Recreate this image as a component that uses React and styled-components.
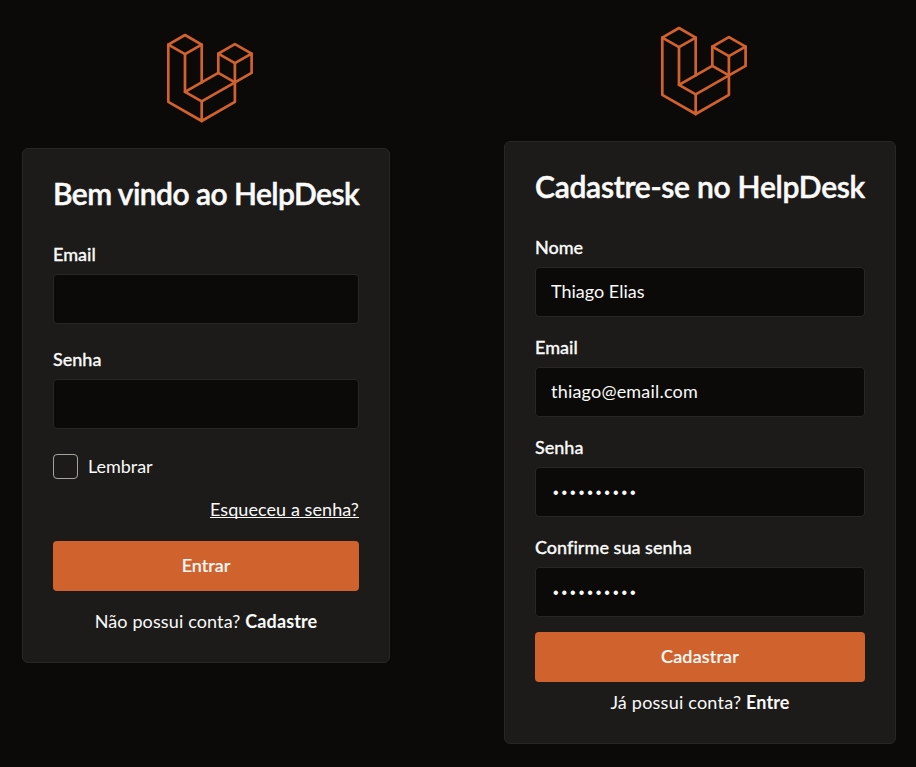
import React from 'react';
import styled, { createGlobalStyle } from 'styled-components';

const GlobalStyle = createGlobalStyle`
  *, *::before, *::after { box-sizing: border-box; }
  body {
    margin: 0;
    background: #0b0a08;
    color: #fafaf9;
    font-family: Lato, sans-serif;
    font-size: 18px;
    font-variant-ligatures: none;
  }
`;

const Page = styled.main`
  display: flex;
  align-items: flex-start;
  gap: 114px;
  min-height: 767px;
  padding: 0 20px 0 22px;
`;

const Column = styled.section`
  display: flex;
  flex-direction: column;
  align-items: center;
  flex: none;
  width: ${(p) => p.$width}px;
  padding-top: ${(p) => p.$top}px;
`;

const LogoSvg = styled.svg`
  display: block;
  width: 88px;
  height: 90px;
  margin: 0 0 25px 8px;
  fill: none;
  stroke: #d2622d;
  stroke-width: 2.7;
  stroke-linejoin: round;
  stroke-linecap: round;
`;

const Card = styled.form`
  display: flex;
  flex-direction: column;
  width: 100%;
  padding: 30px;
  background: #1c1b19;
  border: 1px solid #272624;
  border-radius: 6px;
`;

const Title = styled.h1`
  height: 28px;
  margin: 0 0 36px;
  font-size: 30px;
  font-weight: 600;
  line-height: 28px;
  letter-spacing: ${(p) => p.$spacing}px;
  -webkit-text-stroke: 0.5px currentColor;
  white-space: nowrap;
`;

const Fields = styled.div`
  display: flex;
  flex-direction: column;
  gap: ${(p) => p.$gap}px;
`;

const FieldLabel = styled.label`
  display: flex;
  flex-direction: column;
  gap: 9px;
  font-weight: 500;
  line-height: 22px;
  letter-spacing: ${(p) => p.$spacing || 0}px;
  -webkit-text-stroke: 0.3px currentColor;
`;

const Input = styled.input`
  width: 100%;
  height: 50px;
  padding: ${(p) => (p.type === 'password' ? '2px 15px 0 17px' : '0 15px 2px')};
  background: #0b0a08;
  border: 1px solid #272624;
  border-radius: 4px;
  outline: none;
  color: inherit;
  font: ${(p) => (p.type === 'password' ? '16px "Liberation Sans", sans-serif' : '18px Lato, sans-serif')};
  letter-spacing: ${(p) => (p.type === 'password' ? 2.96 : p.$spacing || 0)}px;
  -webkit-text-stroke: 0;
`;

const Remember = styled.label`
  display: flex;
  align-items: center;
  gap: 10px;
  height: 25px;
  margin-top: 25px;
  line-height: 22px;
  letter-spacing: -0.05px;
`;

const RememberText = styled.span`
  padding-bottom: 2px;
`;

const Checkbox = styled.input`
  appearance: none;
  width: 25px;
  height: 25px;
  margin: 0;
  border: 1px solid #a8a29e;
  border-radius: 4px;
`;

const Forgot = styled.a`
  align-self: flex-end;
  height: 24px;
  margin: 18px 0 20px;
  line-height: 24px;
  letter-spacing: 0.07px;
  text-decoration: underline;
  text-decoration-thickness: 1px;
  text-underline-offset: 1px;
  text-decoration-skip-ink: none;
`;

const Submit = styled.button`
  height: 50px;
  margin-top: ${(p) => p.$top || 0}px;
  padding: 0 0 2px;
  border: 0;
  border-radius: 4px;
  background: #d0622d;
  color: inherit;
  font: 500 18px Lato, sans-serif;
  letter-spacing: ${(p) => p.$spacing || 0}px;
  -webkit-text-stroke: 0.2px currentColor;
`;

const Footer = styled.p`
  height: 20px;
  margin: ${(p) => p.$top}px 0 0;
  line-height: 19px;
  text-align: center;
  letter-spacing: ${(p) => p.$spacing}px;
  white-space: nowrap;

  b { font-weight: 700; letter-spacing: 0.13px; }
`;

const Logo = () => (
  <LogoSvg viewBox="166 33 88 90" aria-hidden="true">
    <path d="M185 35 201.7 44.6 185 54.1 168.3 44.6Z" />
    <path d="M168.3 44.6V101.8L201.7 121V101.4L185 91.9V54.1" />
    <path d="M201.7 44.6V82.4" />
    <path d="M185 91.9 218.3 72.9 234.9 82.4" />
    <path d="M234.9 44.1 251.6 53.7 234.9 63.2 218.3 53.7Z" />
    <path d="M218.3 53.7V72.9M251.6 53.7V72.9L201.7 101.4" />
    <path d="M234.9 63.2V101.8L201.7 121" />
  </LogoSvg>
);

const Field = ({ label, labelSpacing, textSpacing, type = 'text', value = '' }) => (
  <FieldLabel $spacing={labelSpacing}>
    {label}
    <Input type={type} defaultValue={value} $spacing={textSpacing} />
  </FieldLabel>
);

export default function App() {
  return (
    <>
      <GlobalStyle />
      <Page>
        <Column $width={368} $top={33}>
          <Logo />
          <Card>
            <Title $spacing={-0.55}>Bem vindo ao HelpDesk</Title>
            <Fields $gap={24}>
              <Field label="Email" />
              <Field label="Senha" />
            </Fields>
            <Remember>
              <Checkbox type="checkbox" />
              <RememberText>Lembrar</RememberText>
            </Remember>
            <Forgot>Esqueceu a senha?</Forgot>
            <Submit type="button">Entrar</Submit>
            <Footer $top={21} $spacing={0.13}>
              Não possui conta? <b>Cadastre</b>
            </Footer>
          </Card>
        </Column>
        <Column $width={392} $top={26}>
          <Logo />
          <Card>
            <Title $spacing={-0.27}>Cadastre-se no HelpDesk</Title>
            <Fields $gap={19}>
              <Field label="Nome" value="Thiago Elias" />
              <Field label="Email" value="thiago@email.com" textSpacing={0.2} />
              <Field label="Senha" type="password" value="helpdesk01" />
              <Field label="Confirme sua senha" labelSpacing={0.03} type="password" value="helpdesk01" />
            </Fields>
            <Submit type="button" $top={15} $spacing={0.15}>Cadastrar</Submit>
            <Footer $top={11} $spacing={0.22}>
              Já possui conta? <b>Entre</b>
            </Footer>
          </Card>
        </Column>
      </Page>
    </>
  );
}
